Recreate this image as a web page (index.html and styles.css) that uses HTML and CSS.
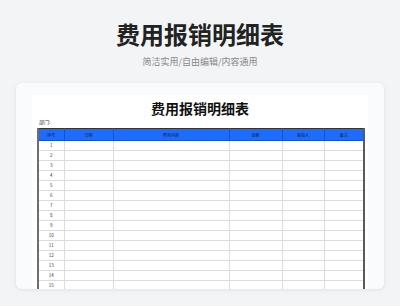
FILE: index.html
```html
<!DOCTYPE html>
<html lang="zh-CN">
<head>
<meta charset="utf-8">
<title>费用报销明细表</title>
<link rel="stylesheet" href="styles.css">
</head>
<body>
<header class="top">
  <h1 class="title">费用报销明细表</h1>
  <p class="subtitle">简洁实用/自由编辑/内容通用</p>
</header>
<main class="card">
  <section class="sheet">
    <h2 class="sheet-title">费用报销明细表</h2>
    <div class="dept">部门:</div>
    <table class="grid">
      <colgroup>
        <col class="c1"><col class="c2"><col class="c3"><col class="c4"><col class="c5"><col class="c6">
      </colgroup>
      <thead>
        <tr><th>序号</th><th>日期</th><th>费用内容</th><th>金额</th><th>报销人</th><th>备注</th></tr>
      </thead>
      <tbody>
        <tr><td>1</td><td></td><td></td><td></td><td></td><td></td></tr>
        <tr><td>2</td><td></td><td></td><td></td><td></td><td></td></tr>
        <tr><td>3</td><td></td><td></td><td></td><td></td><td></td></tr>
        <tr><td>4</td><td></td><td></td><td></td><td></td><td></td></tr>
        <tr><td>5</td><td></td><td></td><td></td><td></td><td></td></tr>
        <tr><td>6</td><td></td><td></td><td></td><td></td><td></td></tr>
        <tr><td>7</td><td></td><td></td><td></td><td></td><td></td></tr>
        <tr><td>8</td><td></td><td></td><td></td><td></td><td></td></tr>
        <tr><td>9</td><td></td><td></td><td></td><td></td><td></td></tr>
        <tr><td>10</td><td></td><td></td><td></td><td></td><td></td></tr>
        <tr><td>11</td><td></td><td></td><td></td><td></td><td></td></tr>
        <tr><td>12</td><td></td><td></td><td></td><td></td><td></td></tr>
        <tr><td>13</td><td></td><td></td><td></td><td></td><td></td></tr>
        <tr><td>14</td><td></td><td></td><td></td><td></td><td></td></tr>
        <tr><td>15</td><td></td><td></td><td></td><td></td><td></td></tr>
      </tbody>
    </table>
  </section>
</main>
</body>
</html>
```
FILE: styles.css
```css
* { box-sizing: border-box; }
html, body { margin: 0; padding: 0; }
body {
  width: 400px;
  height: 306px;
  overflow: hidden;
  background: #f3f4f6;
  font-family: "Noto Sans CJK SC", "Noto Sans", sans-serif;
}
.top {
  padding-top: 18px;
  text-align: center;
}
.title {
  margin: 0;
  font-size: 24px;
  line-height: 32px;
  font-weight: 700;
  color: #222;
}
.subtitle {
  margin: 5px 0 0;
  font-size: 9px;
  line-height: 14px;
  color: #888;
}
.card {
  margin: 14px 16px 0;
  height: 206px;
  background: #fafbfc;
  border-radius: 6px;
  box-shadow: 0 1px 4px rgba(0,0,0,0.08);
  padding: 12px 16px 0;
  overflow: hidden;
}
.sheet {
  background: #fff;
  height: 200px;
  padding: 4px 5px 0;
}
.sheet-title {
  margin: 0;
  text-align: center;
  font-size: 14px;
  line-height: 18px;
  font-weight: 700;
  color: #111;
}
.dept {
  margin-top: 1px;
  font-size: 5px;
  line-height: 7px;
  color: #333;
  padding-left: 2px;
}
.grid {
  margin-top: 3px;
  width: 326px;
  table-layout: fixed;
  border-collapse: collapse;
  border-left: 2px solid #6e6e6e;
  border-right: 2px solid #5a5a5a;
  border-top: 1px solid #333;
}
.c1 { width: 26px; }
.c2 { width: 49px; }
.c3 { width: 116px; }
.c4 { width: 53px; }
.c5 { width: 42px; }
.c6 { width: 40px; }
.grid th {
  height: 12px;
  padding: 0;
  background: #1f6cfb;
  border-left: 1px solid #1553c8;
  border-bottom: 1px solid #1553c8;
  font-size: 4px;
  line-height: 4px;
  font-weight: 400;
  color: #0d1f4a;
}
.grid td {
  height: 10px;
  padding: 0;
  border: 1px solid #dcdcdc;
  font-size: 4.5px;
  line-height: 5px;
  text-align: center;
  color: #333;
}
```
